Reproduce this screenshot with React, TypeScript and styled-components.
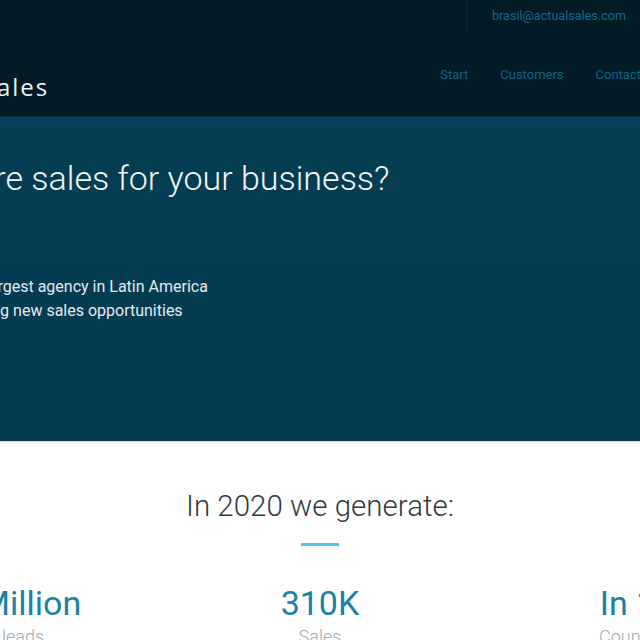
import React from "react";
import styled, { createGlobalStyle } from "styled-components";

const Global = createGlobalStyle`
  * { box-sizing: border-box; }
  html, body { margin: 0; padding: 0; background: #ffffff; }
  body { font-family: Roboto, "Liberation Sans", Arial, sans-serif; overflow: hidden; }
`;

const Page = styled.div`
  width: 640px;
  overflow: hidden;
`;

const Band = styled.div<{ $bg: string }>`
  display: flex;
  justify-content: center;
  background: ${(p) => p.$bg};
`;

const Container = styled.div`
  flex: 0 0 1000px;
  width: 1000px;
  padding: 0 30px;
`;

const Header = styled.header`
  display: flex;
  flex-direction: column;
  background: #021b24;
  border-bottom: 1px solid #06303f;
`;

const TopBar = styled.div`
  display: flex;
  justify-content: flex-end;
  height: 33px;
  border-bottom: 1px solid #04222c;
`;

const ContactInfo = styled.a`
  display: flex;
  align-items: center;
  padding: 0 164px 1px 25px;
  border-left: 1px solid #072a35;
  color: #0e6a8f;
  font-size: 12.6px;
  text-decoration: none;
`;

const NavRow = styled.div`
  display: flex;
  align-items: flex-start;
  height: 83px;
`;

const Logo = styled.a`
  display: flex;
  align-items: flex-end;
  gap: 6px;
  padding-top: 38px;
  color: #eef3f5;
  font-family: "Open Sans", "DejaVu Sans", sans-serif;
  font-size: 24px;
  line-height: 32px;
  letter-spacing: 2px;
  text-decoration: none;
`;

const Nav = styled.nav`
  display: flex;
  gap: 32px;
  margin-left: auto;
  margin-right: 149px;
  padding-top: 32px;
`;

const NavLink = styled.a`
  color: #0d6587;
  font-size: 13px;
  line-height: 20px;
  text-decoration: none;
`;

const Hero = styled.section`
  height: 325px;
  background: linear-gradient(180deg, #073f55 0%, #053d52 12%, #043b50 100%);
  border-bottom: 1px solid #c9dde4;
`;

const HeroInner = styled.div`
  display: flex;
  flex-direction: column;
  padding-top: 40px;
`;

const HeroTitle = styled.h1`
  margin: 0 0 0 9px;
  color: #f1f5f6;
  font-size: 34px;
  font-weight: 300;
  line-height: 42px;
`;

const HeroText = styled.p`
  margin: 76px 0 0;
  color: #e3eaec;
  font-size: 16px;
  line-height: 24px;
`;

const StatsBand = styled.div`
  display: flex;
  justify-content: center;
  background: #ffffff;
`;

const Stats = styled.section`
  display: flex;
  flex-direction: column;
  align-items: center;
  flex: 0 0 auto;
  padding: 46px 0 40px;
`;

const StatsTitle = styled.h2`
  margin: 0;
  color: #333b40;
  font-size: 29.5px;
  font-weight: 300;
  line-height: 36px;
  text-align: center;
`;

const Divider = styled.span`
  display: block;
  flex: 0 0 auto;
  width: 38px;
  height: 3px;
  margin-top: 19px;
  background: #52c3ea;
`;

const StatGrid = styled.div`
  display: grid;
  grid-template-columns: repeat(3, 1fr);
  width: 951px;
  margin-top: 36px;
`;

const Stat = styled.div`
  display: flex;
  flex-direction: column;
  align-items: center;
`;

const StatValue = styled.span`
  color: #1a82a6;
  font-size: 34px;
  line-height: 42px;
`;

const StatLabel = styled.span`
  color: #a3a8ab;
  font-size: 18px;
  font-weight: 300;
  line-height: 26px;
`;

const LogoMark = () => (
  <svg width="48" height="30" viewBox="0 0 48 30" aria-hidden="true">
    <path d="M4 26 L18 4 L32 26" fill="none" stroke="#2ab0dd" strokeWidth="4" />
  </svg>
);

export default function App() {
  return (
    <Page>
      <Global />
      <Header>
        <Band $bg="#021b24">
          <Container>
            <TopBar>
              <ContactInfo href="#">brasil@actualsales.com</ContactInfo>
            </TopBar>
            <NavRow>
              <Logo href="#">
                <LogoMark />
                actualsales
              </Logo>
              <Nav>
                <NavLink href="#">Start</NavLink>
                <NavLink href="#">Customers</NavLink>
                <NavLink href="#">Contact</NavLink>
              </Nav>
            </NavRow>
          </Container>
        </Band>
      </Header>
      <Hero>
        <Band $bg="transparent">
          <Container>
            <HeroInner>
              <HeroTitle>Want more sales for your business?</HeroTitle>
              <HeroText>
                Actual Sales is the largest agency in Latin America
                <br />
                focused on generating new sales opportunities
              </HeroText>
            </HeroInner>
          </Container>
        </Band>
      </Hero>
      <StatsBand>
        <Stats>
          <StatsTitle>In 2020 we generate:</StatsTitle>
          <Divider />
          <StatGrid>
            <Stat>
              <StatValue>1.5 Million</StatValue>
              <StatLabel>New leads</StatLabel>
            </Stat>
            <Stat>
              <StatValue>310K</StatValue>
              <StatLabel>Sales</StatLabel>
            </Stat>
            <Stat>
              <StatValue>In 10</StatValue>
              <StatLabel>Countries</StatLabel>
            </Stat>
          </StatGrid>
        </Stats>
      </StatsBand>
    </Page>
  );
}
